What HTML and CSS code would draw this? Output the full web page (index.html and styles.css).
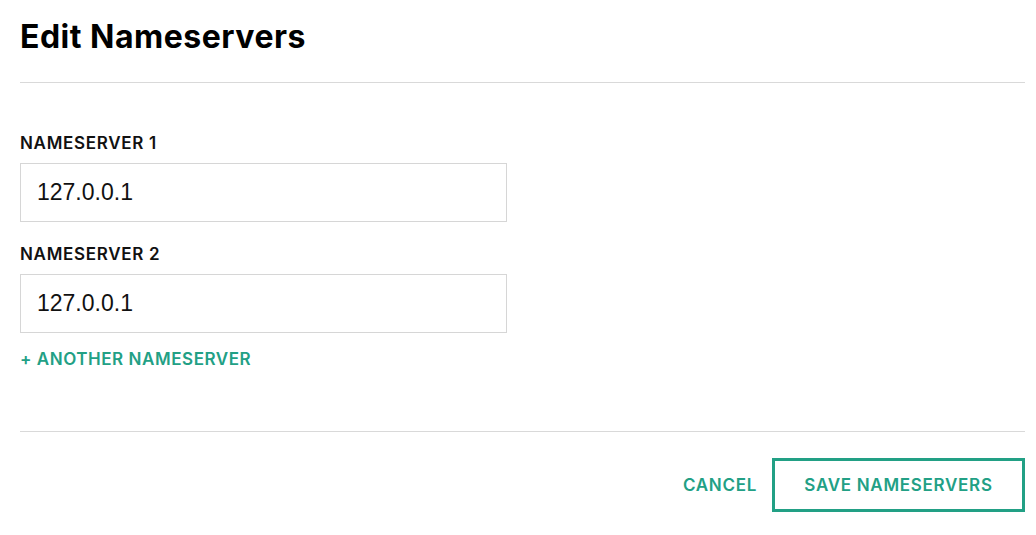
FILE: index.html
```html
<!DOCTYPE html>
<html lang="en">
<head>
<meta charset="utf-8">
<title>Edit Nameservers</title>
<link rel="stylesheet" href="styles.css">
</head>
<body>
<div class="modal">
  <header class="modal-header">
    <h1 class="title">Edit Nameservers</h1>
  </header>
  <div class="modal-body">
    <div class="field">
      <label class="field-label" for="ns1">NAMESERVER 1</label>
      <input class="field-input" id="ns1" type="text" value="127.0.0.1">
    </div>
    <div class="field">
      <label class="field-label" for="ns2">NAMESERVER 2</label>
      <input class="field-input" id="ns2" type="text" value="127.0.0.1">
    </div>
    <a class="add-link" href="#">+ ANOTHER NAMESERVER</a>
  </div>
  <footer class="modal-footer">
    <button class="btn btn-link" type="button">CANCEL</button>
    <button class="btn btn-outline" type="button">SAVE NAMESERVERS</button>
  </footer>
</div>
</body>
</html>
```
FILE: styles.css
```css
* { box-sizing: border-box; }
html, body { margin: 0; padding: 0; background: #fff; }
body {
  font-family: "Inter", "Liberation Sans", sans-serif;
  color: #111;
}
.modal {
  width: 1005px;
  margin-left: 20px;
}
.modal-header {
  padding-top: 18px;
  padding-bottom: 26px;
  border-bottom: 1px solid #d9d9d9;
}
.title {
  margin: 0;
  font-size: 32px;
  line-height: 38px;
  font-weight: 700;
  color: #000;
  letter-spacing: 0.5px;
}
.modal-body {
  padding-top: 50px;
  padding-bottom: 62px;
  border-bottom: 1px solid #d9d9d9;
}
.field {
  display: flex;
  flex-direction: column;
  margin-bottom: 22px;
}
.field:last-of-type { margin-bottom: 16px; }
.field-label {
  font-size: 17px;
  line-height: 20px;
  font-weight: 600;
  color: #111;
  margin-bottom: 10px;
  letter-spacing: 0.7px;
}
.field-input {
  width: 487px;
  height: 59px;
  border: 1px solid #d6d6d6;
  border-radius: 0;
  padding: 0 16px;
  font-family: "Liberation Sans", Arial, sans-serif;
  font-size: 23px;
  color: #111;
  background: #fff;
  outline: none;
}
.add-link {
  display: inline-block;
  font-size: 17px;
  line-height: 20px;
  font-weight: 600;
  color: #22a085;
  text-decoration: none;
  letter-spacing: 0.55px;
}
.modal-footer {
  display: flex;
  justify-content: flex-end;
  align-items: center;
  gap: 15px;
  padding-top: 26px;
}
.btn {
  font-family: "Inter", "Liberation Sans", sans-serif;
  font-size: 17px;
  line-height: 20px;
  font-weight: 600;
  color: #22a085;
  background: #fff;
  cursor: pointer;
  letter-spacing: 0.7px;
}
.btn-link {
  border: none;
  padding: 0;
}
.btn-outline {
  width: 253px;
  height: 54px;
  border: 3px solid #22a085;
  padding: 0;
}
```
